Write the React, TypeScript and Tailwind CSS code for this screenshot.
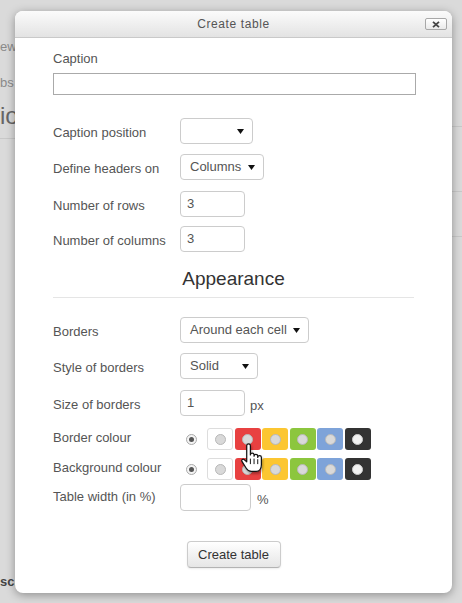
import React from 'react';

const font = { fontFamily: '"Liberation Sans", Arial, sans-serif' };

const Arrow: React.FC = () => (
  <svg width="7" height="5" viewBox="0 0 7 5" className="shrink-0">
    <path d="M0 0h7L3.5 5z" fill="#111" />
  </svg>
);

const Select: React.FC<{ value: string; width: string }> = ({ value, width }) => (
  <div
    className={`${width} h-[26px] flex items-center justify-between pl-[9px] pr-[8px] bg-white border border-[#ccc] rounded-[4px] text-[13px] leading-[16px] text-[#555]`}
  >
    <span>{value}</span>
    <Arrow />
  </div>
);

const TextBox: React.FC<{ value?: string; width: string; height?: string }> = ({ value, width, height = 'h-[26px]' }) => (
  <div
    className={`${width} ${height} pl-[6px] pt-[4px] bg-white border border-[#ccc] rounded-[4px] text-[13px] leading-[16px] text-[#555]`}
  >
    {value}
  </div>
);

const Row: React.FC<{ label: string; mt: string; shift?: boolean; children: React.ReactNode }> = ({
  label,
  mt,
  shift = true,
  children,
}) => (
  <div className={`flex items-center ${mt}`}>
    <div
      className={`w-[127px] shrink-0 text-[13px] leading-[16px] text-[#555] whitespace-nowrap ${
        shift ? 'translate-y-[2px]' : '-translate-y-[1px]'
      }`}
    >
      {label}
    </div>
    <div className="flex items-center">{children}</div>
  </div>
);

const swatches = ['#e84141', '#fcc631', '#8cc63e', '#7ea3d9', '#333333'];

const Swatch: React.FC<{ color: string; white?: boolean }> = ({ color, white }) => (
  <div
    className={`w-[26px] h-[22px] rounded-[3px] flex items-center justify-center ${white ? 'bg-white border border-[#ddd]' : ''}`}
    style={white ? undefined : { backgroundColor: color }}
  >
    <div
      className={`w-[11px] h-[11px] rounded-full border ${
        color === '#333333' ? 'bg-[#f2f2f2] border-[#ccc]' : 'bg-[#d9d9d9] border-[#b8b8b8]'
      }`}
    />
  </div>
);

const ColourPicker: React.FC<{ children?: React.ReactNode }> = ({ children }) => (
  <div className="relative flex items-center">
    <div className="ml-[6px] w-[11px] h-[11px] rounded-full border border-[#aaa] bg-[#f4f4f4] flex items-center justify-center">
      <div className="w-[5px] h-[5px] rounded-full bg-[#555]" />
    </div>
    <div className="ml-[10px] flex gap-[1.5px]">
      <Swatch color="#ffffff" white />
      {swatches.map(c => (
        <Swatch key={c} color={c} />
      ))}
    </div>
    {children}
  </div>
);

const HandCursor: React.FC = () => (
  <svg
    width="22"
    height="30"
    viewBox="0 0 18 24"
    className="absolute z-10 left-[60px] top-[15px] drop-shadow-[1px_2px_1px_rgba(0,0,0,0.3)]"
  >
    <path
      d="M5.5 2a1.5 1.5 0 0 1 3 0V9.5a1.5 1.5 0 0 1 3 0V10.5a1.5 1.5 0 0 1 3 0V11.5a1.5 1.5 0 0 1 3 0V17.5c0 3-1.6 5.5-4.3 5.5H9.2c-2 0-3.1-1-4.1-2.6L1.6 14.8c-.7-1.1.6-2.4 1.7-1.6L5.5 15.1Z"
      fill="#fff"
      stroke="#111"
      strokeWidth="1"
      strokeLinejoin="round"
    />
    <path d="M8.5 12.5v4.5M11.5 12.5v4.5M14.5 13v4" stroke="#111" strokeWidth="0.8" />
  </svg>
);

const App: React.FC = () => {
  return (
    <div className="relative w-[462px] h-[603px] overflow-hidden bg-[#dadada]" style={font}>
      {/* page behind the modal */}
      <div className="flex justify-between h-full">
        <div className="w-[60px] flex flex-col">
          <div className="mt-[38px] text-[13px] leading-[18px] text-[#8a8a8a] whitespace-nowrap">ew</div>
          <div className="mt-[18px] text-[13px] leading-[18px] text-[#8a8a8a] whitespace-nowrap">bs</div>
          <div className="mt-[10px] text-[24px] text-[#666] leading-[28px] whitespace-nowrap">io</div>
          <div className="mt-[8px] h-px bg-[#c8c8c8]" />
          <div className="mt-[68px] ml-[30px] text-[12px] font-bold text-[#555]">M</div>
          <div className="flex-1" />
          <div className="mb-[12px] text-[13px] font-bold text-[#444] whitespace-nowrap">sc.</div>
        </div>
        <div className="w-[20px] flex flex-col">
          <div className="mt-[76px] ml-[2px] text-[13px] text-[#9aa4b0]">s</div>
          <div className="mt-[30px] h-px bg-[#c8c8c8]" />
          <div className="mt-[64px] h-px bg-[#c8c8c8]" />
          <div className="mt-[44px] h-px bg-[#c8c8c8]" />
        </div>
      </div>

      {/* modal dialog */}
      <div className="absolute left-[15px] top-[11px] w-[437px] h-[582px] bg-white rounded-[8px] shadow-[0_2px_10px_rgba(0,0,0,0.35)] flex flex-col">
        <div className="relative h-[27px] shrink-0 rounded-t-[8px] border-b border-[#c9c9c9] bg-gradient-to-b from-[#fbfbfb] to-[#e3e3e3] flex items-center justify-center">
          <span className="text-[12px] tracking-[0.6px] text-[#555]">Create table</span>
          <div className="absolute right-[5px] top-[7px] w-[22px] h-[12px] rounded-[2px] border border-[#a8a8a8] bg-gradient-to-b from-white to-[#eaeaea] flex items-center justify-center">
            <svg width="8" height="7" viewBox="0 0 8 7">
              <path d="M1 0.8l6 5.4M7 0.8l-6 5.4" stroke="#444" strokeWidth="1.8" />
            </svg>
          </div>
        </div>

        <div className="px-[38px] flex flex-col">
          <div className="mt-[12px] text-[13px] leading-[18px] text-[#555]">Caption</div>
          <div className="mt-[5px] w-[363px] h-[22px] border border-[#aaa] bg-white" />

          <Row label="Caption position" mt="mt-[23px]">
            <Select value="" width="w-[73px]" />
          </Row>
          <Row label="Define headers on" mt="mt-[10px]">
            <Select value="Columns" width="w-[84px]" />
          </Row>
          <Row label="Number of rows" mt="mt-[11px]">
            <TextBox value="3" width="w-[65px]" />
          </Row>
          <Row label="Number of columns" mt="mt-[9px]">
            <TextBox value="3" width="w-[65px]" />
          </Row>

          <div className="mt-[15px] text-center text-[19px] leading-[24px] text-[#333]">Appearance</div>
          <div className="mt-[6px] h-px bg-[#e5e5e5]" />

          <Row label="Borders" mt="mt-[19px]">
            <Select value="Around each cell" width="w-[129px]" />
          </Row>
          <Row label="Style of borders" mt="mt-[10px]">
            <Select value="Solid" width="w-[78px]" />
          </Row>
          <Row label="Size of borders" mt="mt-[11px]">
            <TextBox value="1" width="w-[65px]" />
            <span className="ml-[5px] translate-y-[3px] text-[13px] leading-[16px] text-[#555]">px</span>
          </Row>
          <Row label="Border colour" mt="mt-[12px]" shift={false}>
            <ColourPicker>
              <HandCursor />
            </ColourPicker>
          </Row>
          <Row label="Background colour" mt="mt-[8px]" shift={false}>
            <ColourPicker />
          </Row>
          <Row label="Table width (in %)" mt="mt-[4px]" shift={false}>
            <TextBox width="w-[71px]" height="h-[27px]" />
            <span className="ml-[6px] translate-y-[2px] text-[13px] leading-[16px] text-[#555]">%</span>
          </Row>

          <div className="mt-[30px] flex justify-center">
            <button className="w-[94px] h-[27px] rounded-[4px] border border-[#ccc] border-b-[#b3b3b3] bg-gradient-to-b from-white to-[#e6e6e6] text-[13px] text-[#333] shadow-[0_1px_2px_rgba(0,0,0,0.08)]">
              Create table
            </button>
          </div>
        </div>
      </div>
    </div>
  );
};

export default App;
